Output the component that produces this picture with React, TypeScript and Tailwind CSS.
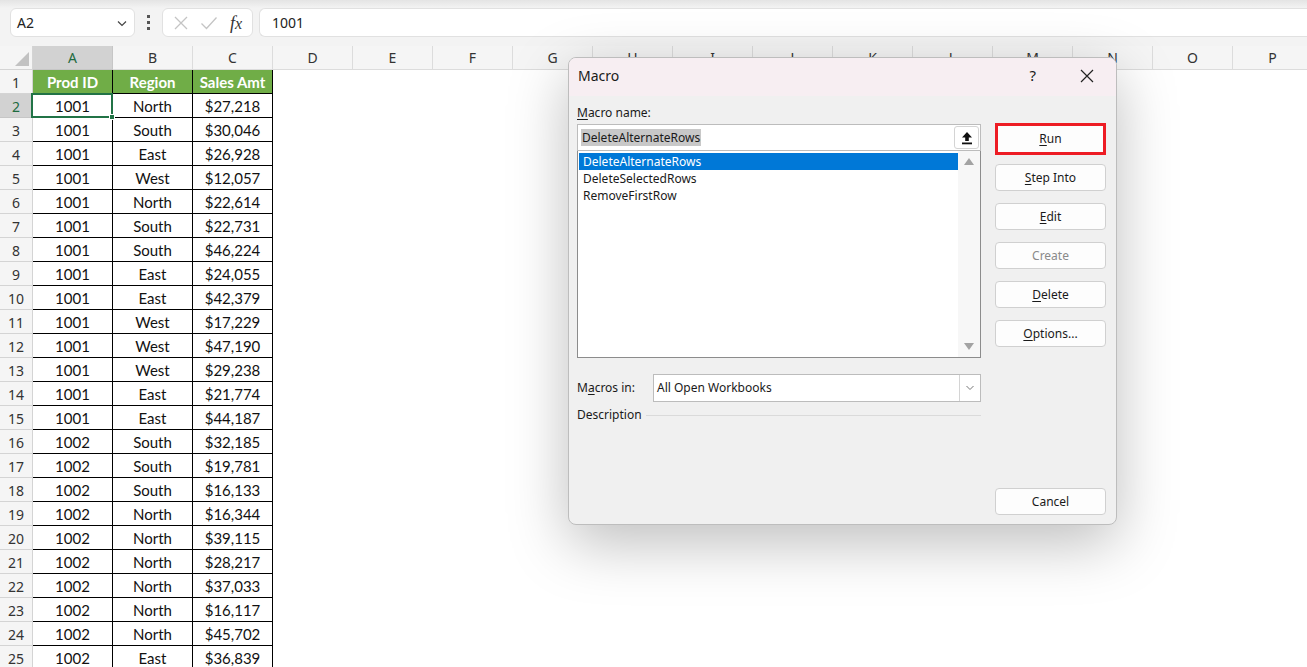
import React from "react";

const rows: [string, string, string][] = [
  ["1001", "North", "$27,218"],
  ["1001", "South", "$30,046"],
  ["1001", "East", "$26,928"],
  ["1001", "West", "$12,057"],
  ["1001", "North", "$22,614"],
  ["1001", "South", "$22,731"],
  ["1001", "South", "$46,224"],
  ["1001", "East", "$24,055"],
  ["1001", "East", "$42,379"],
  ["1001", "West", "$17,229"],
  ["1001", "West", "$47,190"],
  ["1001", "West", "$29,238"],
  ["1001", "East", "$21,774"],
  ["1001", "East", "$44,187"],
  ["1002", "South", "$32,185"],
  ["1002", "South", "$19,781"],
  ["1002", "South", "$16,133"],
  ["1002", "North", "$16,344"],
  ["1002", "North", "$39,115"],
  ["1002", "North", "$28,217"],
  ["1002", "North", "$37,033"],
  ["1002", "North", "$16,117"],
  ["1002", "North", "$45,702"],
  ["1002", "East", "$36,839"],
];

const cols = ["A", "B", "C", "D", "E", "F", "G", "H", "I", "J", "K", "L", "M", "N", "O", "P"];

const uiFont = "font-['Noto_Sans','Open_Sans',sans-serif]";
const cellFont = "font-['Lato','Noto_Sans',sans-serif]";

function FormulaBar() {
  return (
    <div className={`h-[46px] bg-[#f3f3f3] ${uiFont}`}>
      <div className="h-[8px] bg-gradient-to-b from-[#e4e4e4] to-[#f3f3f3]" />
      <div className="flex h-[29px] items-stretch">
        <div className="ml-[10px] flex w-[125px] items-center justify-between rounded-md border border-[#e1e1e1] bg-white pl-[6px] pr-[6px] text-[14px] text-[#222]">
          <span>A2</span>
          <svg width="12" height="12" viewBox="0 0 12 12" className="text-[#444]">
            <path d="M2 4.5 L6 8.5 L10 4.5" fill="none" stroke="currentColor" strokeWidth="1.2" />
          </svg>
        </div>
        <div className="flex w-[27px] flex-col items-center justify-center gap-[3px]">
          <span className="h-[3px] w-[3px] bg-[#555]" />
          <span className="h-[3px] w-[3px] bg-[#555]" />
          <span className="h-[3px] w-[3px] bg-[#555]" />
        </div>
        <div className="flex w-[91px] items-center justify-around rounded-md border border-[#e1e1e1] bg-white px-[4px]">
          <svg width="16" height="16" viewBox="0 0 16 16">
            <path d="M2 2 L14 14 M14 2 L2 14" stroke="#c4c4c4" strokeWidth="1.3" fill="none" />
          </svg>
          <svg width="18" height="16" viewBox="0 0 18 16">
            <path d="M1.5 8.5 L6.5 13.5 L16.5 2.5" stroke="#c4c4c4" strokeWidth="1.3" fill="none" />
          </svg>
          <span className="font-['Liberation_Serif',serif] text-[18px] italic leading-none text-[#333]">
            f<span className="text-[16px]">x</span>
          </span>
        </div>
        <div className="ml-[6px] flex flex-1 items-center rounded-l-md border border-r-0 border-[#e1e1e1] bg-white pl-[12px] text-[14px] text-[#222]">
          1001
        </div>
      </div>
    </div>
  );
}

function Sheet() {
  return (
    <div className="flex flex-col">
      <div className={`flex h-[24px] ${uiFont}`}>
        <div className="relative w-[33px] shrink-0 border-b border-r border-[#d4d4d4] bg-[#f5f5f5]">
          <svg width="14" height="14" viewBox="0 0 14 14" className="absolute bottom-[3px] right-[3px]">
            <path d="M14 0 L14 14 L0 14 Z" fill="#c2c2c2" />
          </svg>
        </div>
        {cols.map((c) => (
          <div
            key={c}
            className={`flex w-[80px] shrink-0 items-center justify-center border-r border-b text-[14px] ${
              c === "A"
                ? "border-[#c6c6c6] bg-[#d2d2d2] text-[#1e6b3f]"
                : "border-[#dcdcdc] bg-[#f5f5f5] text-[#333]"
            }`}
          >
            {c}
          </div>
        ))}
      </div>
      <div className={`flex h-[24px] ${cellFont}`}>
        <div className={`flex w-[33px] shrink-0 items-center justify-center border-b border-r border-[#d4d4d4] bg-[#f5f5f5] pt-[1px] text-[14px] text-[#333] ${uiFont}`}>
          1
        </div>
        {["Prod ID", "Region", "Sales Amt"].map((h) => (
          <div
            key={h}
            className="flex w-[80px] shrink-0 items-center justify-center border-b border-r border-black bg-[#70ad47] pt-[1px] text-[15px] font-bold text-white"
          >
            {h}
          </div>
        ))}
      </div>
      {rows.map((r, idx) => {
        const n = idx + 2;
        const sel = n === 2;
        return (
          <div key={n} className={`flex h-[24px] ${cellFont}`}>
            <div
              className={`flex w-[33px] shrink-0 items-center justify-center border-b border-r pt-[1px] text-[14px] ${uiFont} ${
                sel ? "border-[#c6c6c6] bg-[#d2d2d2] text-[#1e6b3f]" : "border-[#d4d4d4] bg-[#f5f5f5] text-[#333]"
              }`}
            >
              {n}
            </div>
            {r.map((v, i) => (
              <div
                key={i}
                className={`relative flex w-[80px] shrink-0 items-center justify-center border-b border-r border-black bg-white pt-[1px] text-[15px] text-[#111] ${
                  sel && i === 0 ? "z-10" : ""
                }`}
              >
                {v}
                {sel && i === 0 && (
                  <div className="absolute -left-[2px] -top-[1px] h-[25px] w-[82px] border-2 border-[#217346]">
                    <span className="absolute -bottom-[4px] -right-[4px] h-[6px] w-[6px] border border-white bg-[#217346]" />
                  </div>
                )}
              </div>
            ))}
          </div>
        );
      })}
    </div>
  );
}

function Btn({ children, muted }: { children: React.ReactNode; muted?: boolean }) {
  return (
    <div
      className={`flex h-[27px] w-[111px] items-center justify-center rounded-[4px] border border-[#d0d0d0] bg-[#fdfdfd] text-[12px] ${
        muted ? "text-[#8a8a8a]" : "text-[#1a1a1a]"
      }`}
    >
      {children}
    </div>
  );
}

function MacroDialog() {
  return (
    <div
      className={`absolute left-[568px] top-[57px] flex h-[468px] w-[549px] flex-col overflow-hidden rounded-[8px] border border-[#bdbdbd] bg-[#f0f0f0] shadow-[0_18px_60px_rgba(0,0,0,0.26)] ${uiFont}`}
    >
      <div className="flex h-[38px] shrink-0 items-center bg-[#f7eef2] pb-[3px] pl-[9px] pr-[22px] text-[#1a1a1a]">
        <span className="text-[14px]">Macro</span>
        <span className="ml-auto mr-[44px] text-[15px]">?</span>
        <svg width="14" height="14" viewBox="0 0 14 14">
          <path d="M1 1 L13 13 M13 1 L1 13" stroke="#222" strokeWidth="1.2" fill="none" />
        </svg>
      </div>
      <div className="flex flex-1 pl-[8px] pr-[10px]">
        <div className="flex w-[405px] flex-col">
          <div className="mt-[8px] text-[12px] text-[#1a1a1a]">
            <span className="underline underline-offset-2">M</span>acro name:
          </div>
          <div className="mt-[2px] flex h-[27px] items-center border border-[#bcbcbc] bg-white pl-[3px] pr-[1px]">
            <span className="bg-[#c8c8c8] px-[1px] text-[12px] leading-[17px] text-[#1a1a1a]">DeleteAlternateRows</span>
            <div className="ml-auto flex h-[23px] w-[25px] items-center justify-center rounded-[3px] border border-[#d4d4d4] bg-white">
              <svg width="12" height="14" viewBox="0 0 12 14">
                <path d="M6 1 L11 6.5 L7.8 6.5 L7.8 10 L4.2 10 L4.2 6.5 L1 6.5 Z" fill="#111" />
                <rect x="1" y="11.5" width="10" height="1.8" fill="#111" />
              </svg>
            </div>
          </div>
          <div className="flex h-[207px] border border-t-0 border-[#8c8c8c] bg-white">
            <div className="flex flex-1 flex-col pl-[1px] pt-[2px] text-[12px] text-[#1a1a1a]">
              <div className="h-[17px] bg-[#0078d7] pl-[4px] leading-[17px] text-white">DeleteAlternateRows</div>
              <div className="h-[17px] pl-[4px] leading-[17px]">DeleteSelectedRows</div>
              <div className="h-[17px] pl-[4px] leading-[17px]">RemoveFirstRow</div>
            </div>
            <div className="flex w-[22px] flex-col items-center justify-between bg-[#f7f7f7] py-[7px]">
              <svg width="10" height="7" viewBox="0 0 10 7">
                <path d="M5 0 L10 7 L0 7 Z" fill="#a3a3a3" />
              </svg>
              <svg width="10" height="7" viewBox="0 0 10 7">
                <path d="M0 0 L10 0 L5 7 Z" fill="#a3a3a3" />
              </svg>
            </div>
          </div>
          <div className="mt-[16px] flex items-center">
            <span className="w-[76px] text-[12px] text-[#1a1a1a]">
              M<span className="underline underline-offset-2">a</span>cros in:
            </span>
            <div className="flex h-[28px] flex-1 items-center border border-[#bcbcbc] bg-white pl-[3px]">
              <span className="text-[12px] text-[#1a1a1a]">All Open Workbooks</span>
              <div className="ml-auto flex h-full w-[21px] items-center justify-center border-l border-[#d4d4d4]">
                <svg width="8" height="6" viewBox="0 0 8 6">
                  <path d="M0.5 1 L4 4.5 L7.5 1" fill="none" stroke="#777" strokeWidth="1" />
                </svg>
              </div>
            </div>
          </div>
          <div className="mt-[4px] flex items-center gap-[4px]">
            <span className="text-[12px] text-[#1a1a1a]">Description</span>
            <div className="h-px flex-1 bg-[#dadada]" />
          </div>
        </div>
        <div className="ml-[14px] flex flex-col">
          <div className="mt-[27px] flex h-[32px] w-[111px] items-center justify-center border-[3px] border-[#ed1c24] bg-[#fdfdfd] text-[12px] text-[#1a1a1a]">
            <span className="underline underline-offset-2">R</span>un
          </div>
          <div className="mt-[9px] flex flex-col gap-[12px]">
            <Btn>
              <span className="underline underline-offset-2">S</span>tep Into
            </Btn>
            <Btn>
              <span className="underline underline-offset-2">E</span>dit
            </Btn>
            <Btn muted>Create</Btn>
            <Btn>
              <span className="underline underline-offset-2">D</span>elete
            </Btn>
            <Btn>
              <span className="underline underline-offset-2">O</span>ptions...
            </Btn>
          </div>
          <div className="mt-auto mb-[9px]">
            <Btn>Cancel</Btn>
          </div>
        </div>
      </div>
    </div>
  );
}

export default function App() {
  return (
    <div className="relative h-[667px] w-[1307px] overflow-hidden bg-white">
      <FormulaBar />
      <Sheet />
      <MacroDialog />
    </div>
  );
}
